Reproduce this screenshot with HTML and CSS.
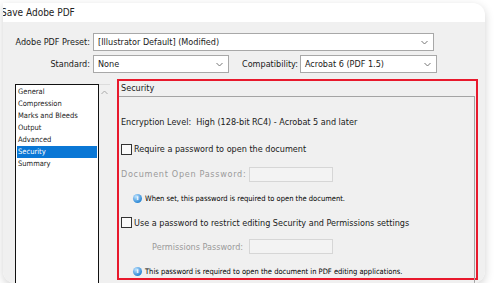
FILE: index.html
```html
<!DOCTYPE html>
<html lang="en">
<head>
    <meta charset="UTF-8">
    <title>Save Adobe PDF</title>
    <link rel="stylesheet" href="styles.css">
</head>
<body>
    <div class="dialog">
        <div class="titlebar">Save Adobe PDF</div>
        <div class="dialog-body">
            <div class="row">
                <span class="lbl">Adobe PDF Preset:</span>
                <div class="select preset">
                    <span>[Illustrator Default] (Modified)</span>
                    <svg class="chev" width="7" height="5" viewBox="0 0 7 5"><polyline points="0.5,1 3.5,4 6.5,1" fill="none" stroke="#777" stroke-width="1"/></svg>
                </div>
            </div>
            <div class="row second">
                <span class="lbl">Standard:</span>
                <div class="select standard">
                    <span>None</span>
                    <svg class="chev" width="7" height="5" viewBox="0 0 7 5"><polyline points="0.5,1 3.5,4 6.5,1" fill="none" stroke="#777" stroke-width="1"/></svg>
                </div>
                <span class="lbl-compat">Compatibility:</span>
                <div class="select compat">
                    <span>Acrobat 6 (PDF 1.5)</span>
                    <svg class="chev" width="7" height="5" viewBox="0 0 7 5"><polyline points="0.5,1 3.5,4 6.5,1" fill="none" stroke="#777" stroke-width="1"/></svg>
                </div>
            </div>

            <div class="main">
                <div class="nav">
                    <ul class="nav-list">
                        <li>General</li>
                        <li>Compression</li>
                        <li>Marks and Bleeds</li>
                        <li>Output</li>
                        <li>Advanced</li>
                        <li class="active">Security</li>
                        <li>Summary</li>
                    </ul>
                    <div class="scrollbar">
                        <svg width="7" height="5" viewBox="0 0 7 5"><polyline points="0.5,4 3.5,1 6.5,4" fill="none" stroke="#aaa" stroke-width="1"/></svg>
                    </div>
                </div>

                <section class="panel">
                    <div class="panel-title">Security</div>
                    <div class="panel-body">
                        <div class="line enc">Encryption Level:&nbsp; High (128-bit RC4) - Acrobat 5 and later</div>
                        <div class="line check-row cb1">
                            <span class="checkbox"></span>
                            <span>Require a password to open the document</span>
                        </div>
                        <div class="line field-row pw1">
                            <span class="field-lbl">Document Open Password:</span>
                            <span class="field"></span>
                        </div>
                        <div class="line info-row info1">
                            <span class="info-icon">i</span>
                            <span>When set, this password is required to open the document.</span>
                        </div>
                        <div class="line check-row cb2">
                            <span class="checkbox"></span>
                            <span>Use a password to restrict editing Security and Permissions settings</span>
                        </div>
                        <div class="line field-row pw2">
                            <span class="field-lbl">Permissions Password:</span>
                            <span class="field"></span>
                        </div>
                        <div class="line info-row info2">
                            <span class="info-icon">i</span>
                            <span>This password is required to open the document in PDF editing applications.</span>
                        </div>
                    </div>
                </section>
            </div>
        </div>
    </div>
</body>
</html>
```

FILE: styles.css
```css
body {
    margin: 0;
    background-color: #fff;
    font-family: "DejaVu Sans Condensed", "DejaVu Sans", "Liberation Sans", sans-serif;
    font-stretch: condensed;
    color: #1a1a1a;
}

.dialog {
    margin: 3px 0 0 3px;
    width: 482px;
    height: 280px;
    background-color: #fff;
    border-radius: 0 12px 12px 12px;
    box-shadow: 0 3px 10px rgba(0, 0, 0, 0.18);
    overflow: hidden;
    display: flex;
    flex-direction: column;
}

.titlebar {
    height: 19px;
    line-height: 19px;
    font-size: 10px;
    margin-left: -2px;
    color: #222;
}

.dialog-body {
    flex-grow: 1;
    background-color: #f0f0f0;
    padding-top: 11px;
    display: flex;
    flex-direction: column;
}

.row {
    display: flex;
    align-items: center;
    height: 18px;
}

.row.second {
    margin-top: 4px;
}

.lbl {
    width: 87px;
    text-align: right;
    font-size: 9px;
    margin-right: 3px;
}

.lbl-compat {
    font-size: 9px;
    margin-left: 13px;
    margin-right: 2px;
}

.select {
    box-sizing: border-box;
    height: 18px;
    background-color: #fff;
    border: 1px solid #a8a8a8;
    display: flex;
    align-items: center;
    justify-content: space-between;
    padding: 0 5px 0 4px;
    font-size: 9px;
}

.preset { width: 341px; }
.standard { width: 136px; }
.compat { width: 137px; }

.main {
    margin-top: 6px;
    flex-grow: 1;
    display: flex;
    align-items: flex-start;
}

.nav {
    display: flex;
    margin-left: 12px;
    margin-top: 5px;
}

.nav-list {
    list-style: none;
    margin: 0;
    padding: 1px 1px 0 1px;
    width: 80px;
    height: 240px;
    background-color: #fff;
    border: 1px solid #111;
}

.nav-list li {
    height: 12px;
    line-height: 12px;
    font-size: 7.5px;
    padding-left: 1px;
    color: #222;
}

.nav-list li.active {
    background-color: #0a77d5;
    color: #fff;
}

.scrollbar {
    width: 11px;
    height: 240px;
    border-top: 1px solid #dcdcdc;
    display: flex;
    justify-content: center;
    padding-top: 5px;
    box-sizing: border-box;
}

.panel {
    margin-left: 7px;
    width: 361px;
    height: 201px;
    box-sizing: border-box;
    border: 2px solid #e8192c;
    display: flex;
    flex-direction: column;
}

.panel-title {
    height: 15px;
    line-height: 15px;
    font-size: 9px;
    padding-left: 2px;
}

.panel-body {
    flex-grow: 1;
    border-top: 1px solid #a4a4a4;
    border-right: 1px solid #a4a4a4;
    margin-right: 1px;
    padding: 10px 0 0 2px;
    font-size: 9px;
}

.line {
    display: flex;
    align-items: center;
}

.enc { height: 29px; }
.cb1 { height: 26px; }
.pw1 { height: 24px; }
.info1 { height: 25px; }
.cb2 { height: 23px; }
.pw2 { height: 25px; }
.info2 { height: 25px; }

.checkbox {
    width: 9px;
    height: 9px;
    border: 1px solid #333;
    background-color: #fafafa;
    margin-right: 2px;
}

.field-lbl {
    width: 122px;
    text-align: right;
    color: #9a9a9a;
    margin-right: 6px;
    white-space: nowrap;
}

.pw1 .field-lbl {
    letter-spacing: 0.7px;
    font-weight: normal;
}

.field {
    width: 84px;
    height: 15px;
    box-sizing: border-box;
    border: 1px solid #d6d6d6;
    background-color: #f3f3f3;
}

.info-row {
    font-size: 7.5px;
    color: #000;
    padding-left: 12px;
}

.info-icon {
    width: 9px;
    height: 9px;
    border-radius: 50%;
    background: radial-gradient(circle at 35% 30%, #bfe3ff, #2f8ad6 70%);
    color: #fff;
    font-size: 7px;
    font-weight: bold;
    line-height: 9px;
    text-align: center;
    margin-right: 3px;
    font-family: "Liberation Serif", serif;
}
```
